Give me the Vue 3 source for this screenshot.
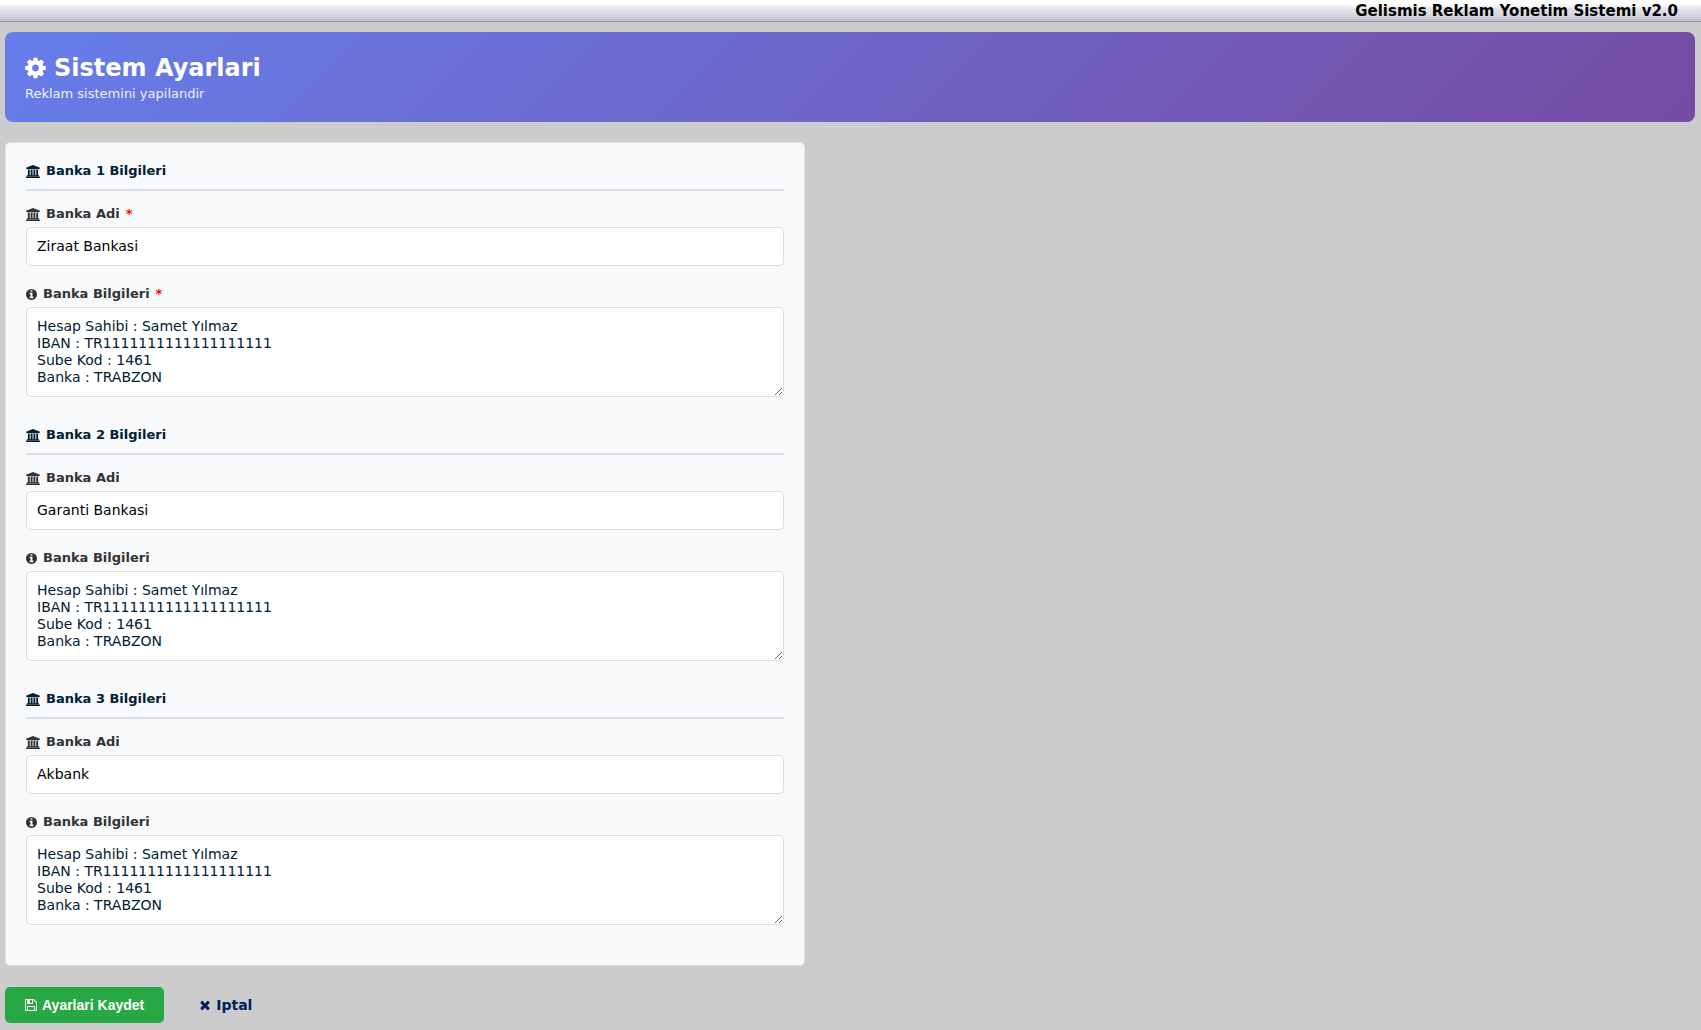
<script setup>
import { ref } from 'vue'

const account = [
  'Hesap Sahibi : Samet Yılmaz',
  'IBAN : TR1111111111111111111',
  'Sube Kod : 1461',
  'Banka : TRABZON',
].join('\n')

const banks = ref([
  { id: 1, name: 'Ziraat Bankasi', info: account, required: true },
  { id: 2, name: 'Garanti Bankasi', info: account, required: false },
  { id: 3, name: 'Akbank', info: account, required: false },
])

const bankIcon =
  'M960 0l960 384v128h-128q0 26-20.500 45t-48.500 19h-1526q-28 0-48.500-19t-20.500-45h-128v-128zm-704 640h256v768h128v-768h256v768h128v-768h256v768h128v-768h256v768h59q28 0 48.500 19t20.500 45v64h-1664v-64q0-26 20.500-45t48.500-19h59v-768zm1595 960q28 0 48.500 19t20.500 45v128h-1920v-128q0-26 20.500-45t48.500-19h1782z'
</script>

<template>
  <div class="page">
    <header class="topbar">Gelismis Reklam Yonetim Sistemi v2.0</header>

    <main class="content">
      <section class="banner">
        <h1 class="banner-title">
          <svg class="icon-cog" viewBox="0 0 1536 1792" aria-hidden="true">
            <path d="M1024 896q0-106-75-181t-181-75-181 75-75 181 75 181 181 75 181-75 75-181zm512-109v222q0 12-8 23t-20 13l-185 28q-19 54-39 91 35 50 107 138 10 12 10 25t-9 23q-27 37-99 108t-94 71q-12 0-26-9l-138-108q-44 23-91 38-16 136-29 186-7 28-36 28h-222q-14 0-24.500-8.500t-11.500-21.500l-28-184q-49-16-90-37l-141 107q-10 9-25 9-14 0-25-11-126-114-165-168-7-10-7-23 0-12 8-23 15-21 51-66.500t54-70.500q-27-50-41-99l-183-27q-13-2-21-12.500t-8-23.500v-222q0-12 8-23t19-13l186-28q14-46 39-92-40-57-107-138-10-12-10-24 0-10 9-23 26-36 98.500-107.500t94.500-71.500q13 0 26 10l138 107q44-23 91-38 16-136 29-186 7-28 36-28h222q14 0 24.500 8.500t11.500 21.500l28 184q49 16 90 37l142-107q9-9 24-9 13 0 25 10 129 119 165 170 7 8 7 22 0 12-8 23-15 21-51 66.500t-54 70.500q26 50 41 98l183 28q13 2 21 12.500t8 23.500z" />
          </svg>
          Sistem Ayarlari
        </h1>
        <p class="banner-text">Reklam sistemini yapilandir</p>
      </section>

      <form @submit.prevent>
        <div class="card">
          <fieldset v-for="bank in banks" :key="bank.id" class="bank">
            <h2 class="bank-title">
              <svg class="icon-bank" viewBox="0 0 1920 1792" aria-hidden="true"><path :d="bankIcon" /></svg>
              Banka {{ bank.id }} Bilgileri
            </h2>

            <div class="field">
              <label :for="`bank-name-${bank.id}`">
                <svg class="icon-bank" viewBox="0 0 1920 1792" aria-hidden="true"><path :d="bankIcon" /></svg>
                Banka Adi
                <span v-if="bank.required" class="required">*</span>
              </label>
              <input :id="`bank-name-${bank.id}`" v-model="bank.name" type="text" />
            </div>

            <div class="field">
              <label :for="`bank-info-${bank.id}`">
                <svg class="icon-info" viewBox="0 0 1536 1792" aria-hidden="true">
                  <path d="M1024 1376v-160q0-14-9-23t-23-9h-96v-512q0-14-9-23t-23-9h-320q-14 0-23 9t-9 23v160q0 14 9 23t23 9h96v320h-96q-14 0-23 9t-9 23v160q0 14 9 23t23 9h448q14 0 23-9t9-23zm-128-896v-160q0-14-9-23t-23-9h-192q-14 0-23 9t-9 23v160q0 14 9 23t23 9h192q14 0 23-9t9-23zm640 416q0 209-103 385.500t-279.500 279.500-385.500 103-385.500-103-279.500-279.500-103-385.500 103-385.500 279.500-279.500 385.500-103 385.500 103 279.500 279.500 103 385.500z" />
                </svg>
                Banka Bilgileri
                <span v-if="bank.required" class="required">*</span>
              </label>
              <textarea :id="`bank-info-${bank.id}`" v-model="bank.info" rows="4" spellcheck="false"></textarea>
            </div>
          </fieldset>
        </div>

        <div class="actions">
          <button type="submit" class="save">
            <svg class="icon-save" viewBox="0 0 1536 1792" aria-hidden="true">
              <path d="M384 1536h768v-384h-768v384zm896 0h128v-896q0-14-10-38.500t-20-34.500l-281-281q-10-10-34-20t-39-10v416q0 40-28 68t-68 28h-576q-40 0-68-28t-28-68v-416h-128v1280h128v-416q0-40 28-68t68-28h832q40 0 68 28t28 68v416zm-384-928v-320q0-13-9.500-22.500t-22.500-9.500h-192q-13 0-22.500 9.500t-9.500 22.500v320q0 13 9.500 22.500t22.500 9.500h192q13 0 22.500-9.500t9.500-22.500zm640 32v928q0 40-28 68t-68 28h-1344q-40 0-68-28t-28-68v-1344q0-40 28-68t68-28h928q40 0 88 20t76 48l280 280q28 28 48 76t20 88z" />
            </svg>
            Ayarlari Kaydet
          </button>
          <a href="#" class="cancel">
            <svg class="icon-times" viewBox="0 0 1408 1792" aria-hidden="true">
              <path d="M1298 1322q0 40-28 68l-136 136q-28 28-68 28t-68-28l-294-294-294 294q-28 28-68 28t-68-28l-136-136q-28-28-28-68t28-68l294-294-294-294q-28-28-28-68t28-68l136-136q28-28 68-28t68 28l294 294 294-294q28-28 68-28t68 28l136 136q28 28 28 68t-28 68l-294 294 294 294q28 28 28 68z" />
            </svg>
            Iptal
          </a>
        </div>
      </form>
    </main>
  </div>
</template>

<style>
body {
  margin: 0;
  background: #ccc;
}
</style>

<style scoped>
.page {
  color: #002033;
  font-family: Verdana, 'DejaVu Sans', sans-serif;
  font-size: 13px;
  line-height: 16px;
}

svg {
  fill: currentColor;
  flex: none;
}

.topbar {
  box-sizing: border-box;
  height: 22px;
  padding: 0 23px;
  border-bottom: 1px solid #94949c;
  background: linear-gradient(#fff 4px, #e2e3e9 9px, #dcdde4 13px, #bfc0ca);
  color: #000;
  font-size: 15px;
  font-weight: bold;
  line-height: 23px;
  text-align: right;
}

.content {
  padding: 10px 6px 7px 5px;
}

.banner {
  box-sizing: border-box;
  min-height: 90px;
  margin-bottom: 20px;
  padding: 20px;
  border-radius: 8px;
  background: linear-gradient(135deg, #667eea 0%, #764ba2 100%);
  color: #fff;
}

.banner-title {
  display: flex;
  align-items: center;
  gap: 8px;
  margin: 0 0 2px;
  font-size: 24px;
  font-weight: bold;
  line-height: 32px;
}

.banner-text {
  margin: 0;
  opacity: 0.9;
}

.card {
  box-sizing: border-box;
  max-width: 800px;
  padding: 20px;
  border: 1px solid #dee2e6;
  border-radius: 5px;
  background: #f8f9fb;
}

.bank {
  min-width: 0;
  margin: 0;
  padding: 0;
  border: 0;
}

.bank + .bank {
  margin-top: 30px;
}

.bank:last-child {
  margin-bottom: 20px;
}

.bank-title {
  display: flex;
  align-items: center;
  gap: 6px;
  margin: 0 0 15px;
  padding-bottom: 10px;
  border-bottom: 2px solid #dee0e8;
  font-size: 13px;
  font-weight: bold;
}

.field + .field {
  margin-top: 20px;
}

label {
  display: flex;
  align-items: center;
  gap: 6px;
  margin-bottom: 5px;
  color: #333;
  font-weight: bold;
}

.required {
  color: #f00;
}

input,
textarea {
  display: block;
  box-sizing: border-box;
  width: 100%;
  margin: 0;
  padding: 10px;
  border: 1px solid #ddd;
  border-radius: 5px;
  background: #fff;
  color: #000;
  font-family: inherit;
  font-size: 14px;
  line-height: 17px;
}

textarea {
  color: #002033;
  resize: vertical;
}

.icon-cog {
  width: 21px;
  height: 24px;
}

.icon-bank {
  width: 14px;
  height: 13px;
}

.icon-info {
  width: 11px;
  height: 13px;
}

.icon-save,
.icon-times {
  width: 12px;
  height: 14px;
}

.actions {
  display: flex;
  align-items: center;
  gap: 15px;
  margin-top: 21px;
}

.save,
.cancel {
  display: flex;
  align-items: center;
  gap: 5px;
  padding: 10px 20px;
  font-size: 14px;
  font-weight: bold;
  line-height: 16px;
}

.save {
  border: 0;
  border-radius: 5px;
  background: #28a745;
  color: #fff;
  font-family: Arial, 'Liberation Sans', sans-serif;
  cursor: pointer;
}

.cancel {
  color: #002060;
  text-decoration: none;
}
</style>
